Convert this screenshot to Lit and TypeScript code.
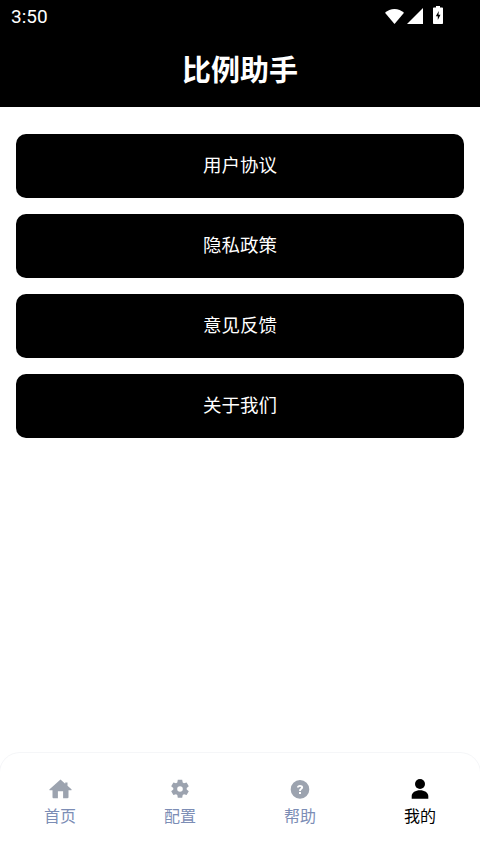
import { LitElement, html, css, svg } from "lit";
import { customElement } from "lit/decorators.js";

const tabs = [
  { label: "首页", active: false, icon: svg`<path d="M12.500 2.600 1.600 12.200c-.4.400-.2 1 .3 1H4.500v7.100c0 .5.400.9.900.9h4.500v-6.900h5.200v6.900h4.500c.5 0 .9-.4.900-.9v-7.100h2.600c.5 0 .7-.6.300-1l-3.900-3.400V5.500h-2.300v1.300z"/>` },
  { label: "配置", active: false, icon: svg`<path fill-rule="evenodd" d="M9.800 2.800h4.400l.5 2.700 1.300.8 2.600-.9 2.200 3.800-2.100 1.800v1.500l2.100 1.800-2.200 3.800-2.600-.9-1.300.8-.5 2.700H9.800l-.5-2.700-1.300-.8-2.600.9-2.200-3.800 2.100-1.800v-1.500L3.200 9.200l2.200-3.800 2.600.9 1.300-.8zM12 9.200a2.800 2.800 0 1 0 0 5.600 2.800 2.800 0 0 0 0-5.600z"/>` },
  { label: "帮助", active: false, icon: svg`<path fill-rule="evenodd" d="M12 3.100a9.300 9.300 0 1 0 0 18.600 9.300 9.300 0 0 0 0-18.600zM12 8c-1.800 0-3 .9-3.100 2.500h2c.1-.6.500-.8 1.100-.8s1 .3 1 .8c0 .5-.3.700-.8 1.100-.8.6-1.100 1.100-1.100 2.300H13c0-.7.200-1 .8-1.400.8-.6 1.300-1.200 1.300-2.200C15.100 8.800 13.700 8 12 8zm-1 7h2v2h-2z"/>` },
  { label: "我的", active: true, icon: svg`<circle cx="12" cy="7" r="5"/><path d="M12 13.300c-4.500 0-8.300 2.200-8.300 5.800v2.600h16.600v-2.600c0-3.600-3.800-5.800-8.300-5.800z"/>` },
];

const items = ["用户协议", "隐私政策", "意见反馈", "关于我们"];

@customElement("app-root")
export class AppRoot extends LitElement {
  static styles = css`
    :host {
      display: flex;
      flex-direction: column;
      width: 480px;
      height: 853px;
      background: #fff;
      font-family: "Noto Sans CJK SC", "Noto Sans", sans-serif;
      overflow: hidden;
    }
    .header {
      background: #000;
      color: #fff;
      height: 107px;
      flex: none;
      display: flex;
      flex-direction: column;
    }
    .status {
      height: 33px;
      display: flex;
      align-items: center;
      justify-content: space-between;
      padding: 0 37px 0 11px;
    }
    .time {
      font-family: Roboto, sans-serif;
      font-size: 19px;
      line-height: 33px;
    }
    .status-icons {
      display: flex;
      align-items: flex-end;
      margin-bottom: 3px;
    }
    .status-icons svg {
      display: block;
      fill: #fff;
    }
    .wifi { margin-right: 3px; }
    .cell { margin-right: 10px; }
    .title {
      flex: 1;
      display: flex;
      align-items: center;
      justify-content: center;
      font-size: 29px;
      line-height: 40px;
      font-weight: 700;
      padding-bottom: 4px;
    }
    .list {
      flex: 1;
      display: flex;
      flex-direction: column;
      gap: 16px;
      padding: 26.500px 16px 0;
    }
    .item {
      height: 64px;
      box-sizing: border-box;
      padding-bottom: 3px;
      background: #000;
      color: #fff;
      border-radius: 10px;
      display: flex;
      align-items: center;
      justify-content: center;
      font-size: 18.500px;
    }
    .tabbar {
      flex: none;
      height: 100px;
      box-sizing: border-box;
      display: grid;
      grid-template-columns: repeat(4, 1fr);
      box-shadow: 0 0 0 1px #f5f6f8;
      border-radius: 20px 20px 0 0;
      padding-top: 24px;
    }
    .tab {
      display: flex;
      flex-direction: column;
      align-items: center;
      color: #7c8db5;
      font-size: 16px;
      line-height: 22px;
    }
    .tab svg {
      display: block;
      width: 24px;
      height: 24px;
      fill: #9ca3af;
      margin-bottom: 3px;
    }
    .tab.active { color: #000; }
    .tab.active svg { fill: #000; }
  `;

  render() {
    return html`
      <div class="header">
        <div class="status">
          <span class="time">3:50</span>
          <div class="status-icons">
            <svg class="wifi" width="19" height="15" viewBox="0 0 19 15"><path d="M0 3.800C2.600 1.400 5.900 0 9.500 0s6.900 1.400 9.500 3.800L9.500 15z"/></svg>
            <svg class="cell" width="16" height="16" viewBox="0 0 16 16"><path d="M16 0V16H0z"/></svg>
            <svg width="10" height="18" viewBox="0 0 10 18"><path fill-rule="evenodd" d="M3 0h4v1.500h2.200a.8.800 0 0 1 .8.800v14.900a.8.800 0 0 1-.8.800H.8a.8.800 0 0 1-.8-.8V2.300a.8.800 0 0 1 .8-.8H3zM5.800 5 2.800 10.300h2v3.700l2.700-5.300H5.500z"/></svg>
          </div>
        </div>
        <div class="title">比例助手</div>
      </div>
      <div class="list">
        ${items.map((t) => html`<div class="item">${t}</div>`)}
      </div>
      <div class="tabbar">
        ${tabs.map(
          (t) => html`<div class="tab ${t.active ? "active" : ""}">
            <svg viewBox="0 0 24 24">${t.icon}</svg>
            <span>${t.label}</span>
          </div>`
        )}
      </div>
    `;
  }
}
